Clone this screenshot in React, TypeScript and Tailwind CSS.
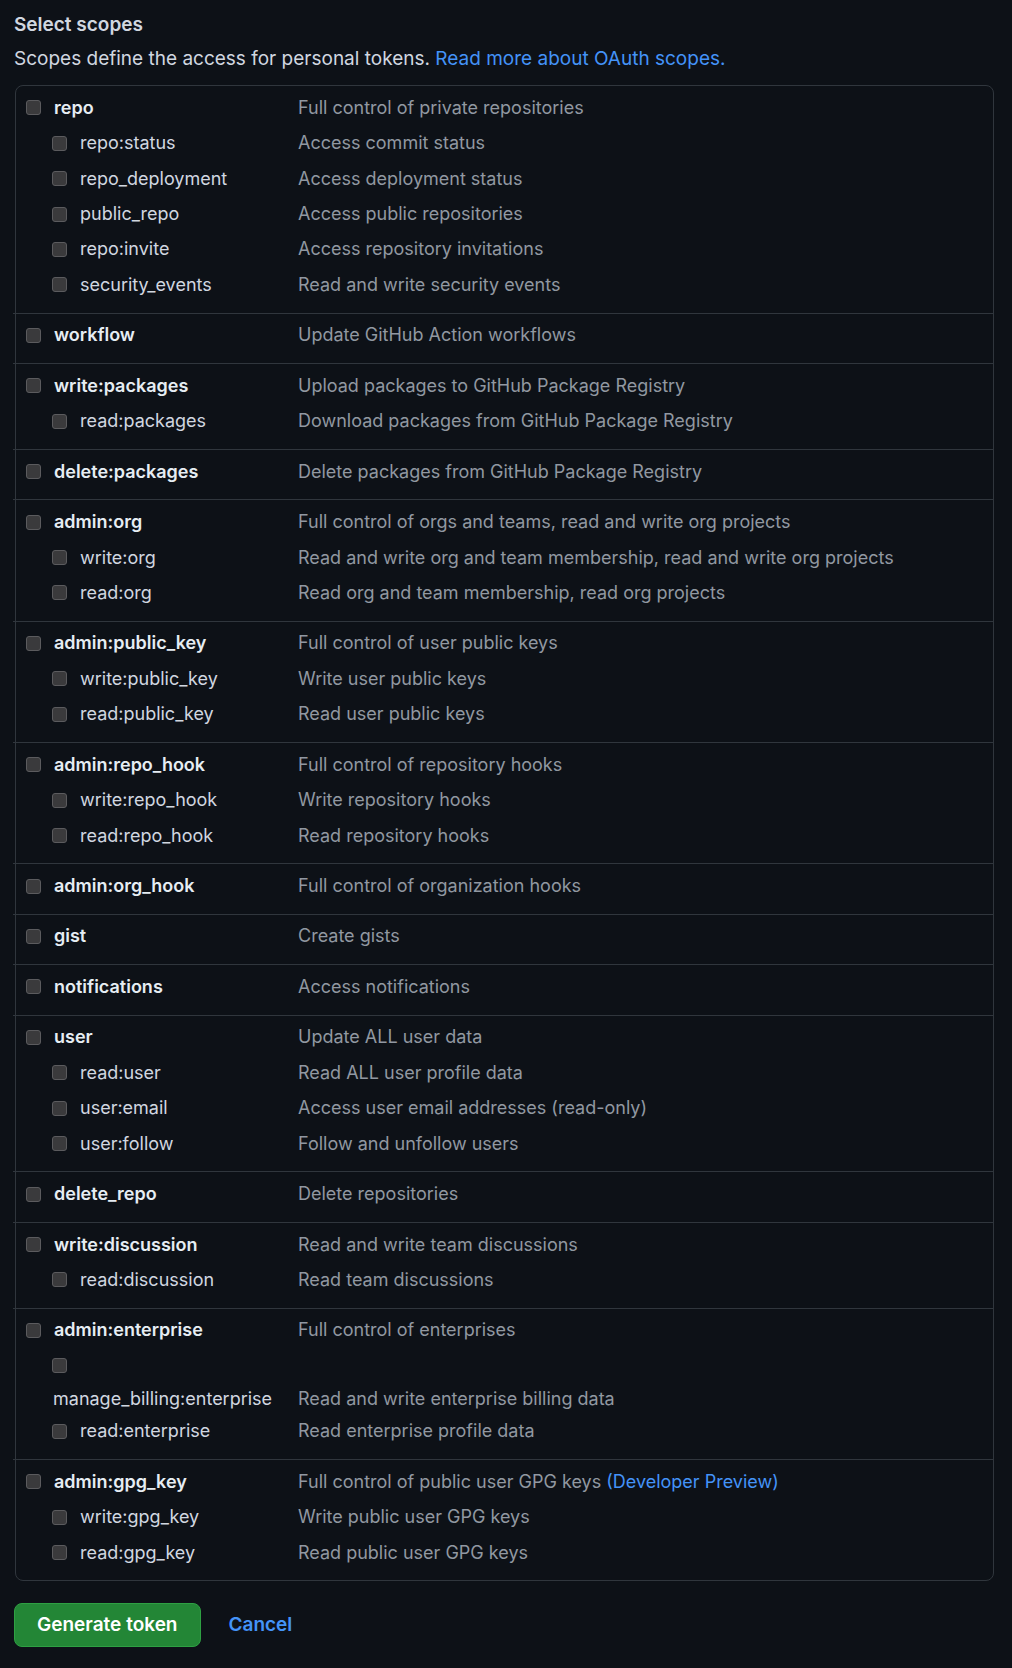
import React from "react";

type Scope = {
  name: string;
  description: string;
  preview?: boolean;
  wrap?: boolean;
};

type ScopeGroup = Scope & { children?: Scope[] };

const scopeGroups: ScopeGroup[] = [
  {
    name: "repo",
    description: "Full control of private repositories",
    children: [
      { name: "repo:status", description: "Access commit status" },
      { name: "repo_deployment", description: "Access deployment status" },
      { name: "public_repo", description: "Access public repositories" },
      { name: "repo:invite", description: "Access repository invitations" },
      { name: "security_events", description: "Read and write security events" },
    ],
  },
  { name: "workflow", description: "Update GitHub Action workflows" },
  {
    name: "write:packages",
    description: "Upload packages to GitHub Package Registry",
    children: [{ name: "read:packages", description: "Download packages from GitHub Package Registry" }],
  },
  { name: "delete:packages", description: "Delete packages from GitHub Package Registry" },
  {
    name: "admin:org",
    description: "Full control of orgs and teams, read and write org projects",
    children: [
      { name: "write:org", description: "Read and write org and team membership, read and write org projects" },
      { name: "read:org", description: "Read org and team membership, read org projects" },
    ],
  },
  {
    name: "admin:public_key",
    description: "Full control of user public keys",
    children: [
      { name: "write:public_key", description: "Write user public keys" },
      { name: "read:public_key", description: "Read user public keys" },
    ],
  },
  {
    name: "admin:repo_hook",
    description: "Full control of repository hooks",
    children: [
      { name: "write:repo_hook", description: "Write repository hooks" },
      { name: "read:repo_hook", description: "Read repository hooks" },
    ],
  },
  { name: "admin:org_hook", description: "Full control of organization hooks" },
  { name: "gist", description: "Create gists" },
  { name: "notifications", description: "Access notifications" },
  {
    name: "user",
    description: "Update ALL user data",
    children: [
      { name: "read:user", description: "Read ALL user profile data" },
      { name: "user:email", description: "Access user email addresses (read-only)" },
      { name: "user:follow", description: "Follow and unfollow users" },
    ],
  },
  { name: "delete_repo", description: "Delete repositories" },
  {
    name: "write:discussion",
    description: "Read and write team discussions",
    children: [{ name: "read:discussion", description: "Read team discussions" }],
  },
  {
    name: "admin:enterprise",
    description: "Full control of enterprises",
    children: [
      { name: "manage_billing:enterprise", description: "Read and write enterprise billing data", wrap: true },
      { name: "read:enterprise", description: "Read enterprise profile data" },
    ],
  },
  {
    name: "admin:gpg_key",
    description: "Full control of public user GPG keys",
    preview: true,
    children: [
      { name: "write:gpg_key", description: "Write public user GPG keys" },
      { name: "read:gpg_key", description: "Read public user GPG keys" },
    ],
  },
];

function Checkbox({ id }: { id: string }) {
  return (
    <input
      id={id}
      type="checkbox"
      className="m-0 h-[15px] w-[15px] shrink-0 appearance-none rounded-[3px] border border-[#5b5b5e] bg-[#3a3a3c]"
    />
  );
}

function Description({ scope }: { scope: Scope }) {
  return (
    <span className="text-[#9198a1]">
      {scope.description}
      {scope.preview && (
        <>
          {" "}
          <a href="#" className="text-[#4493f8]">
            (Developer Preview)
          </a>
        </>
      )}
    </span>
  );
}

function ScopeRow({ scope, nested }: { scope: Scope; nested?: boolean }) {
  const id = `scope-${scope.name}`;

  // too long for the name column: label drops under its checkbox
  if (scope.wrap) {
    return (
      <div className="flex">
        <div className="w-[282px] shrink-0 pl-[36px]">
          <div className="flex h-[35.45px] items-center">
            <Checkbox id={id} />
          </div>
          <label htmlFor={id} className="ml-[1px] flex h-[30px] items-center whitespace-nowrap text-[#d1d7e0]">
            {scope.name}
          </label>
        </div>
        <div className="flex items-end">
          <div className="flex h-[30px] items-center">
            <Description scope={scope} />
          </div>
        </div>
      </div>
    );
  }

  return (
    <div className="flex h-[35.45px] items-center">
      <div className={`flex w-[282px] shrink-0 items-center gap-[13px] ${nested ? "pl-[36px]" : "pl-[10px]"}`}>
        <Checkbox id={id} />
        <label
          htmlFor={id}
          className={nested ? "text-[#d1d7e0]" : "font-semibold text-[#e6edf3]"}
        >
          {scope.name}
        </label>
      </div>
      <Description scope={scope} />
    </div>
  );
}

export default function App() {
  return (
    <div
      className="min-h-[1668px] bg-[#0d1117] pl-[14px] pr-[18px] pt-[11px] text-[19px] leading-[28px] text-[#d1d7e0]"
      style={{ fontFamily: "Inter, 'Liberation Sans', sans-serif" }}
    >
      <h3 className="font-semibold text-[#d1d7e0]">Select scopes</h3>
      <p className="mt-[6px]">
        Scopes define the access for personal tokens.{" "}
        <a href="#" className="text-[#4493f8]">
          Read more about OAuth scopes.
        </a>
      </p>

      <div className="ml-[1px] mt-[12px] rounded-[8px] border border-[#30363d] text-[18px]">
        {scopeGroups.map((group, i) => (
          <div key={group.name}>
            {i > 0 && <div className="-ml-[3px] h-px bg-[#30363d]" />}
            <div className="pb-[10px] pt-[4px]">
              <ScopeRow scope={group} />
              {group.children?.map((child) => (
                <ScopeRow key={child.name} scope={child} nested />
              ))}
            </div>
          </div>
        ))}
      </div>

      <div className="mt-[22px] flex items-center gap-[28px]">
        <button className="h-[44px] rounded-[8px] border border-[#2ea043] bg-[#238636] px-[22px] font-semibold text-white">
          Generate token
        </button>
        <a href="#" className="font-semibold text-[#4493f8]">
          Cancel
        </a>
      </div>
    </div>
  );
}
